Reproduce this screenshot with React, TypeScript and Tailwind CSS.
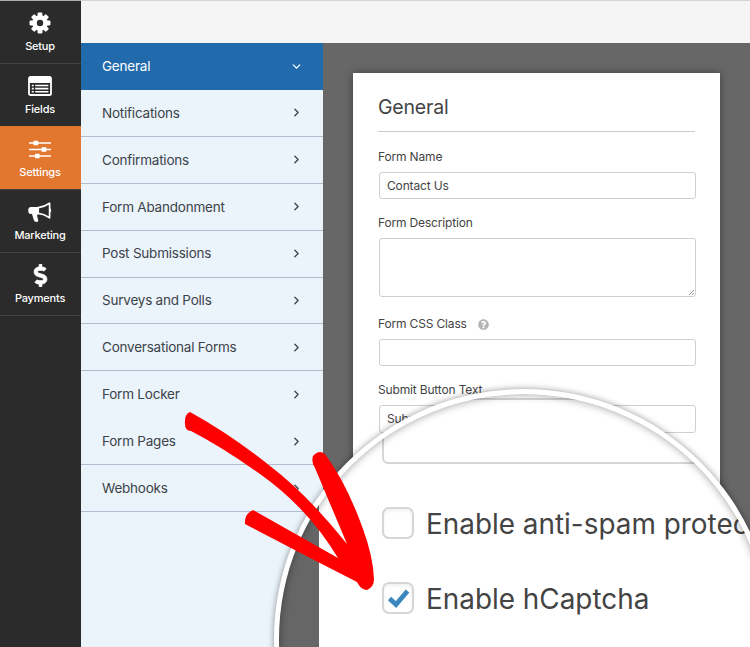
import { FaDollarSign, FaQuestionCircle } from 'react-icons/fa'
import { ChevronDown, ChevronRight } from 'lucide-react'
import type { ReactNode } from 'react'

function GearIcon() {
  return (
    <svg width="22" height="22" viewBox="-11 -11 22 22">
      {[0, 45, 90, 135].map(a => (
        <rect key={a} x="-2.4" y="-10.5" width="4.8" height="21" rx="1.1" fill="#fff" transform={`rotate(${a})`} />
      ))}
      <circle r="7.8" fill="#fff" />
      <circle r="3.2" fill="#2b2b2b" />
    </svg>
  )
}

function FieldsIcon() {
  return (
    <svg width="24" height="20" viewBox="0 0 24 20" fill="none">
      <rect x="1" y="1" width="22" height="18" rx="1.6" stroke="#fff" strokeWidth="1.8" />
      <path d="M1 2h22v5H1z" fill="#fff" />
      <path d="M3.8 9.5h2M3.8 12.6h2M3.8 15.7h2M7.2 9.5h13.2M7.2 12.6h13.2M7.2 15.7h13.2" stroke="#fff" strokeWidth="1.6" />
    </svg>
  )
}

function SlidersIcon() {
  return (
    <svg width="22" height="19" viewBox="0 0 22 19">
      <path d="M0 3h22M0 9.5h22M0 16h22" stroke="#fff" strokeWidth="1.6" />
      <path d="M4.5 .8h4.6v4.4H4.5zM12.5 7.3h4.8v4.4h-4.8zM6 13.8h4.6v4.4H6z" fill="#fff" />
    </svg>
  )
}

function MegaphoneIcon() {
  return (
    <svg width="24" height="21" viewBox="0 0 24 21">
      <path d="M10.5 5H3Q.2 5 .2 8.5T3 12h1l1.8 6q.6 2 2.8 2t1.4-2.4L9 13.4l1.5-1.6z" fill="#fff" />
      <path d="M10.2 5.6Q16 5 21.6 1.2v14.6Q16 12 10.2 11.4z" fill="none" stroke="#fff" strokeWidth="1.7" strokeLinejoin="round" />
      <path d="M22 6.3q2.4 2.2 0 4.4z" fill="#fff" />
    </svg>
  )
}

const panels: { label: string; icon: ReactNode; active?: boolean }[] = [
  { label: 'Setup', icon: <GearIcon /> },
  { label: 'Fields', icon: <FieldsIcon /> },
  { label: 'Settings', icon: <SlidersIcon />, active: true },
  { label: 'Marketing', icon: <MegaphoneIcon /> },
  { label: 'Payments', icon: <FaDollarSign size={23} stroke="#fff" strokeWidth={14} /> },
]

const sections = [
  'Notifications',
  'Confirmations',
  'Form Abandonment',
  'Post Submissions',
  'Surveys and Polls',
  'Conversational Forms',
  'Form Locker',
  'Form Pages',
  'Webhooks',
]

function Toolbar() {
  return (
    <nav className="flex w-[81px] shrink-0 flex-col border-t border-[#a9adab] bg-[#2b2b2b]">
      {panels.map(p => (
        <div
          key={p.label}
          className={`flex h-[63px] flex-col items-center justify-end border-t pr-px pb-[9px] text-white first:h-[62px] first:border-t-0 last:h-[64px] last:border-b ${p.active ? 'border-[#e27730] bg-[#e27730]' : 'border-[#424242]'}`}
        >
          <div className="flex h-[24px] items-center">{p.icon}</div>
          <span className="mt-[3px] text-[11px] leading-[16px] font-medium tracking-[-0.2px]">{p.label}</span>
        </div>
      ))}
    </nav>
  )
}

function SectionList() {
  return (
    <aside className="w-[242px] shrink-0 bg-[#ebf3fb] text-[13.5px] tracking-[-0.22px] text-[#3c434a]">
      <div className="flex h-[47px] items-center justify-between bg-[#216bad] pr-5 pb-px pl-[21px] text-white">
        General
        <ChevronDown size={13} strokeWidth={2.4} />
      </div>
      {sections.map(s => (
        <div
          key={s}
          className={`flex h-[46.9px] items-center justify-between border-b pr-5 pl-[21px] ${s === 'Form Locker' ? 'border-transparent' : 'border-[#b0bdcf]'}`}
        >
          {s}
          <ChevronRight size={13} strokeWidth={2.4} />
        </div>
      ))}
    </aside>
  )
}

function Field({ label, value, help, className, box }: { label: string; value?: string; help?: boolean; className: string; box: string }) {
  return (
    <div className={className}>
      <div className="flex h-[16px] items-center text-[12px] tracking-[-0.16px]">
        {label}
        {help && <FaQuestionCircle size={11} className="ml-[11px] text-[#b5b5b5]" />}
      </div>
      <div className={`relative mt-[7px] -mr-px ml-px flex items-center rounded-[3px] border border-[#cfcfcf] pl-[7px] text-[12px] tracking-[-0.15px] ${box}`}>
        {value}
        {box === 'h-[59px]' && (
          <svg className="absolute right-[1px] bottom-[1px]" width="5" height="5" viewBox="0 0 5 5">
            <path d="M0 5L5 0M3 5l2-2" stroke="#777" strokeWidth=".8" />
          </svg>
        )}
      </div>
    </div>
  )
}

function Checkbox({ label, checked }: { label: string; checked?: boolean }) {
  return (
    <div className="flex h-[32px] items-center whitespace-nowrap">
      <span className="flex h-[32px] w-[32px] shrink-0 items-center justify-center rounded-[7px] border-2 border-[#d6d6d6] bg-white shadow-[inset_0_2px_3px_rgba(0,0,0,0.06)]">
        {checked && (
          <svg width="24" height="22" viewBox="0 0 24 22">
            <path d="M3.5 11.5L10 17.5 21.5 4" fill="none" stroke="#3c87be" strokeWidth="4.8" />
          </svg>
        )}
      </span>
      <span className="mt-[4px] ml-[12px] text-[27.9px] text-[#444]">{label}</span>
    </div>
  )
}

// Magnified view of the checkboxes, laid over the form
function Lens() {
  return (
    <div className="absolute top-[389px] left-[274px] h-[500px] w-[500px] rounded-full bg-white p-[5px] shadow-[0_0_6px_rgba(0,0,0,0.42)]">
      <div className="relative flex h-full w-full overflow-hidden rounded-full">
        <div className="w-[40px] shrink-0 bg-[#666]" />
        <div className="flex grow flex-col bg-white pt-[4px] pl-[63px]">
          <div className="h-[66px] w-[387px] shrink-0 rounded-[6px] border-2 border-[#d6d6d6]" />
          <div className="mt-[43px]"><Checkbox label="Enable anti-spam protec" /></div>
          <div className="mt-[43px]"><Checkbox label="Enable hCaptcha" checked /></div>
        </div>
        <div className="absolute inset-0 rounded-full shadow-[inset_0_0_8px_rgba(0,0,0,0.4)]" />
      </div>
    </div>
  )
}

function Arrow() {
  return (
    <svg className="absolute top-[400px] left-[170px]" width="220" height="200" viewBox="170 400 220 200">
      <path
        d="M190 412Q185 414 185 421Q184 431 191 431Q222 447 260 474Q308 508 338 558L253 510Q244 514 245 524Q300 553 357 582Q361 590 367 590Q374 587 374 579Q373 556 363 529Q347 484 325 454Q319 449 313 456Q311 462 315 468L347 544Q307 494 270 466Q230 434 190 412Z"
        fill="#f00"
      />
    </svg>
  )
}

export default function App() {
  return (
    <div className="relative flex h-[647px] w-[750px] overflow-hidden font-[Inter,'Liberation_Sans',sans-serif]">
      <Toolbar />
      <div className="flex grow flex-col">
        <header className="h-[43px] shrink-0 border-t border-[#d5d5d5] bg-[#f5f5f5]" />
        <div className="flex grow">
          <SectionList />
          <main className="grow bg-[#676767] pt-[30px] pl-[30px]">
            <div className="flex h-[600px] w-[367px] flex-col bg-white pr-[25px] pl-[25px] text-[#444] shadow-[0_0_8px_rgba(0,0,0,0.4)]">
              <h1 className="mt-[20px] h-[39px] border-b border-[#ccc] text-[19.5px] leading-[29px] tracking-[-0.2px]">General</h1>
              <Field label="Form Name" value="Contact Us" className="mt-[17px]" box="h-[27px]" />
              <Field label="Form Description" className="mt-[16px]" box="h-[59px]" />
              <Field label="Form CSS Class" help className="mt-[19px]" box="h-[27px]" />
              <Field label="Submit Button Text" value="Submit" className="mt-[16px]" box="h-[28px]" />
            </div>
          </main>
        </div>
      </div>
      <Lens />
      <Arrow />
    </div>
  )
}
